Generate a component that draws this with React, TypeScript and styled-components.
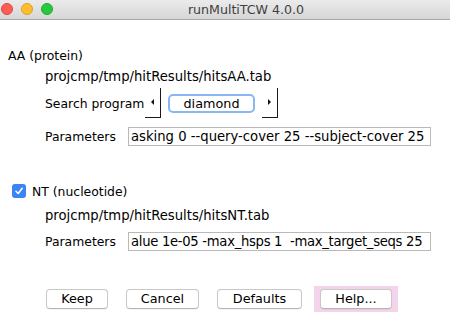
import React from "react";
import styled, { createGlobalStyle } from "styled-components";

const Global = createGlobalStyle`
  html, body { margin: 0; padding: 0; background: #ffffff; }
  body { font-family: "DejaVu Sans", "Liberation Sans", sans-serif; font-size: 12.4px; color: #000; }
  * { box-sizing: border-box; }
`;

const Window = styled.div`
  width: 450px;
  height: 322px;
  background: #ffffff;
  display: flex;
  flex-direction: column;
  overflow: hidden;
`;

const TitleBar = styled.div`
  height: 20px;
  flex: none;
  display: flex;
  align-items: center;
  position: relative;
  background: linear-gradient(#ebebeb, #d6d6d6);
  border-bottom: 1px solid #a8a8a8;
`;

const Lights = styled.div`
  display: flex;
  gap: 8px;
  padding-left: 1px;
  position: absolute;
  left: 0;
  top: 3px;
`;

const Light = styled.span<{ $c: string; $b: string }>`
  width: 12px;
  height: 12px;
  border-radius: 50%;
  background: ${(p) => p.$c};
  border: 0.5px solid ${(p) => p.$b};
`;

const Title = styled.div`
  flex: 1;
  text-align: center;
  padding-left: 42px;
  font-size: 12.6px;
  color: #3f3f3f;
`;

const Content = styled.div`
  display: flex;
  flex-direction: column;
  padding-top: 24px;
`;

const Row = styled.div<{ $h: number; $mt: number; $indent: number }>`
  display: flex;
  align-items: center;
  height: ${(p) => p.$h}px;
  margin-top: ${(p) => p.$mt}px;
  padding-left: ${(p) => p.$indent}px;
`;

const Label = styled.span<{ $w?: number }>`
  white-space: nowrap;
  ${(p) => (p.$w ? `width: ${p.$w}px; flex: none;` : "")}
`;

const Path = styled.span`
  white-space: nowrap;
  font-size: 13.2px;
`;

const ArrowButton = styled.div<{ $ml: number }>`
  width: 16px;
  height: 30px;
  margin-left: ${(p) => p.$ml}px;
  border-right: 1px solid #1a1a1a;
  border-bottom: 1px solid #1a1a1a;
  display: flex;
  align-items: center;
  justify-content: center;
  flex: none;
`;

const Triangle = styled.span<{ $dir: "left" | "right" }>`
  width: 0;
  height: 0;
  border-top: 3px solid transparent;
  border-bottom: 3px solid transparent;
  ${(p) =>
    p.$dir === "left"
      ? "border-right: 3px solid #111; margin-right: 1px; margin-top: -1px;"
      : "border-left: 3px solid #111; margin-left: 0px; margin-top: -1px;"}
`;

const ValueBox = styled.div`
  width: 87px;
  height: 19px;
  margin-left: 7px;
  border: 2px solid #8ab6f3;
  border-radius: 5px;
  background: #fff;
  display: flex;
  align-items: center;
  justify-content: center;
  font-size: 12.8px;
  flex: none;
`;

const TextField = styled.div<{ $ls: number }>`
  width: 303px;
  height: 19px;
  border: 1px solid #b9b9b9;
  background: #fff;
  display: flex;
  align-items: center;
  padding-left: 2px;
  overflow: hidden;
  white-space: nowrap;
  font-size: 13.2px;
  letter-spacing: ${(p) => p.$ls}px;
  flex: none;
`;

const Check = styled.span`
  width: 14px;
  height: 14px;
  border-radius: 3px;
  background: #3b84f6;
  display: flex;
  align-items: center;
  justify-content: center;
  margin-right: 6px;
  flex: none;
`;

const ButtonBar = styled.div`
  display: flex;
  align-items: center;
  gap: 6px;
  height: 29px;
  margin-top: 33px;
  padding-left: 40px;
`;

const FocusWrap = styled.div<{ $focused?: boolean }>`
  padding: 3px 6px;
  background: ${(p) => (p.$focused ? "#f3d4ea" : "transparent")};
  flex: none;
`;

const Button = styled.button<{ $w: number }>`
  width: ${(p) => p.$w}px;
  height: 20px;
  border: 1px solid #c8c8c8;
  border-bottom-color: #b4b4b4;
  border-radius: 4px;
  background: #ffffff;
  box-shadow: 0 0.5px 0.5px rgba(0, 0, 0, 0.08);
  font-family: "DejaVu Sans", "Liberation Sans", sans-serif;
  font-size: 12.8px;
  color: #000;
  padding: 0;
  display: flex;
  align-items: center;
  justify-content: center;
`;

export default function App() {
  return (
    <>
      <Global />
      <Window>
        <TitleBar>
          <Lights>
            <Light $c="#fd5f57" $b="#e0443e" />
            <Light $c="#febc2e" $b="#dea123" />
            <Light $c="#28c840" $b="#1aab29" />
          </Lights>
          <Title>runMultiTCW 4.0.0</Title>
        </TitleBar>
        <Content>
          <Row $h={20} $mt={1} $indent={8}>
            <Label>AA (protein)</Label>
          </Row>
          <Row $h={20} $mt={1} $indent={45}>
            <Path>projcmp/tmp/hitResults/hitsAA.tab</Path>
          </Row>
          <Row $h={30} $mt={2} $indent={45}>
            <Label $w={100}>Search program</Label>
            <ArrowButton $ml={0}>
              <Triangle $dir="left" />
            </ArrowButton>
            <ValueBox>diamond</ValueBox>
            <ArrowButton $ml={7}>
              <Triangle $dir="right" />
            </ArrowButton>
          </Row>
          <Row $h={19} $mt={9} $indent={45}>
            <Label $w={83}>Parameters</Label>
            <TextField $ls={0}>asking 0 --query-cover 25 --subject-cover 25</TextField>
          </Row>
          <Row $h={20} $mt={35} $indent={12}>
            <Check>
              <svg width="10" height="10" viewBox="0 0 10 10">
                <path d="M2 5.3 L4.2 7.5 L8.2 2.3" fill="none" stroke="#fff" strokeWidth="1.6" strokeLinecap="round" strokeLinejoin="round" />
              </svg>
            </Check>
            <Label>NT (nucleotide)</Label>
          </Row>
          <Row $h={20} $mt={4} $indent={45}>
            <Path>projcmp/tmp/hitResults/hitsNT.tab</Path>
          </Row>
          <Row $h={19} $mt={7} $indent={45}>
            <Label $w={83}>Parameters</Label>
            <TextField $ls={-0.3}>alue 1e-05 -max_hsps 1&nbsp; -max_target_seqs 25</TextField>
          </Row>
          <ButtonBar>
            <FocusWrap>
              <Button $w={62}>Keep</Button>
            </FocusWrap>
            <FocusWrap>
              <Button $w={73}>Cancel</Button>
            </FocusWrap>
            <FocusWrap>
              <Button $w={85}>Defaults</Button>
            </FocusWrap>
            <FocusWrap $focused>
              <Button $w={72}>Help...</Button>
            </FocusWrap>
          </ButtonBar>
        </Content>
      </Window>
    </>
  );
}
